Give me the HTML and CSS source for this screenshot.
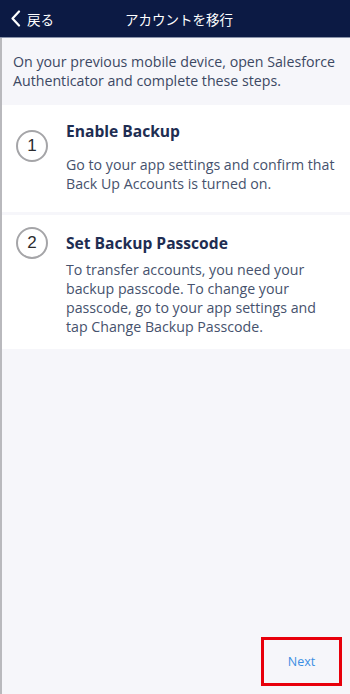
FILE: index.html
```html
<!DOCTYPE html>
<html lang="ja">
<head>
<meta charset="utf-8">
<title>アカウントを移行</title>
<link rel="stylesheet" href="styles.css">
</head>
<body>
<div class="screen">
  <header class="nav">
    <div class="back">
      <svg class="chev" width="11" height="17" viewBox="0 0 11 17"><path d="M9 1.5 L2.5 8.5 L9 15.5" fill="none" stroke="#fff" stroke-width="2.2" stroke-linecap="round" stroke-linejoin="round"/></svg>
      <span>戻る</span>
    </div>
    <div class="title">アカウントを移行</div>
  </header>
  <main class="content">
    <p class="intro">On your previous mobile device, open Salesforce Authenticator and complete these steps.</p>
    <section class="step step1">
      <div class="num">1</div>
      <div class="body">
        <h2>Enable Backup</h2>
        <p>Go to your app settings and confirm that Back Up Accounts is turned on.</p>
      </div>
    </section>
    <section class="step step2">
      <div class="num">2</div>
      <div class="body">
        <h2>Set Backup Passcode</h2>
        <p>To transfer accounts, you need your backup passcode. To change your passcode, go to your app settings and tap Change Backup Passcode.</p>
      </div>
    </section>
    <div class="spacer"></div>
    <footer class="foot">
      <button class="next">Next</button>
    </footer>
  </main>
</div>
</body>
</html>
```
FILE: styles.css
```css
* { box-sizing: border-box; }
html, body { margin: 0; padding: 0; }
body {
  width: 350px;
  height: 694px;
  overflow: hidden;
  font-family: "Open Sans", "Noto Sans CJK JP", sans-serif;
  background: #f6f6fa;
}
.screen {
  display: flex;
  flex-direction: column;
  height: 694px;
}
.nav {
  height: 38px;
  background: #0c1a44;
  color: #fff;
  display: flex;
  align-items: center;
  position: relative;
  border-bottom: 1px solid #8a93aa;
  flex: none;
}
.back {
  display: flex;
  align-items: center;
  gap: 6px;
  padding-left: 10px;
  font-size: 13.5px;
  font-family: "Noto Sans CJK JP", sans-serif;
}
.title {
  position: absolute;
  left: 0;
  right: 0;
  text-align: center;
  padding-left: 8px;
  font-size: 13.5px;
  font-family: "Noto Sans CJK JP", sans-serif;
  pointer-events: none;
}
.content {
  flex: 1;
  display: flex;
  flex-direction: column;
  border-left: 2px solid #b9b9bd;
}
.intro {
  margin: 0;
  padding: 14px 10px 15px 11px;
  font-size: 14.2px;
  line-height: 19px;
  color: #3c4863;
}
.step {
  background: #fff;
  display: flex;
}
.step1 { padding: 16px 13px 19px 0; margin-bottom: 3px; }
.step2 { padding: 18px 13px 13px 0; }
.num {
  flex: none;
  width: 32px;
  height: 32px;
  margin: 9px 18px 0 14px;
  border: 2px solid #a5a5a8;
  border-radius: 50%;
  display: flex;
  align-items: center;
  justify-content: center;
  font-size: 17px;
  color: #2b2b2e;
  font-family: "Liberation Sans", sans-serif;
}
.step2 .num { margin-top: -6px; }
.body h2 {
  margin: 0 0 14px;
  font-size: 15.6px;
  font-weight: 700;
  color: #1e2d52;
  line-height: 20px;
}
.step2 .body h2 { margin-bottom: 7px; }
.body p {
  margin: 0;
  font-size: 14.2px;
  line-height: 19px;
  color: #46526d;
}
.spacer { flex: 1; }
.foot {
  display: flex;
  justify-content: flex-end;
  padding: 0 8px 8px 0;
}
.next {
  width: 81px;
  height: 49px;
  border: 3px solid #e8000b;
  background: transparent;
  color: #3b8ee3;
  font-family: "Open Sans", sans-serif;
  font-size: 12.5px;
  padding: 0;
}
```
